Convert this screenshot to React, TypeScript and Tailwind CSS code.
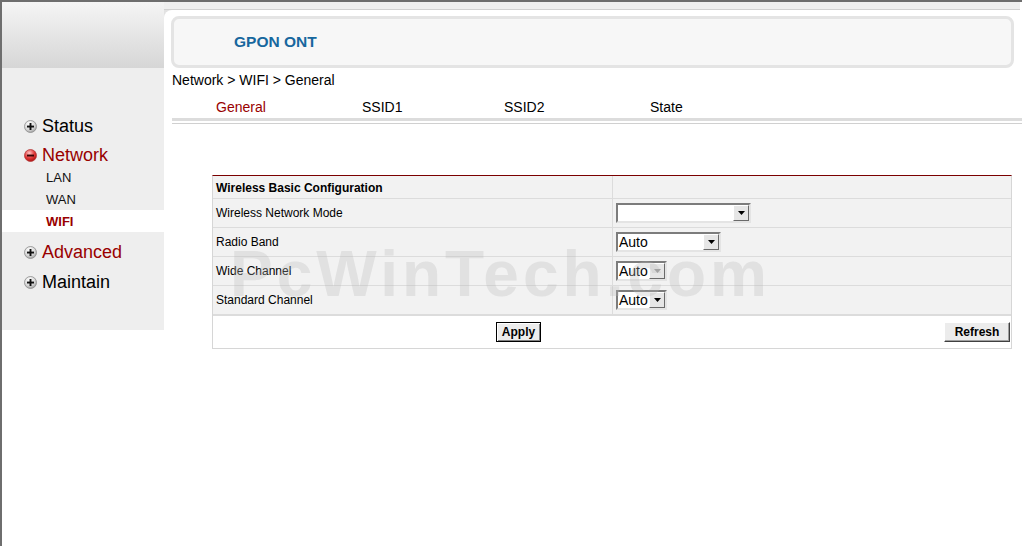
const font = "font-['Liberation_Sans',Arial,sans-serif]";

function Bullet({ open }: { open?: boolean }) {
  if (open) {
    return (
      <svg width="13" height="13" viewBox="0 0 13 13" className="shrink-0">
        <defs>
          <radialGradient id="bRed" cx="40%" cy="30%" r="75%">
            <stop offset="0" stopColor="#ffc4c4" />
            <stop offset="0.55" stopColor="#e23a3a" />
            <stop offset="1" stopColor="#a80c0c" />
          </radialGradient>
        </defs>
        <circle cx="6.5" cy="6.5" r="6" fill="url(#bRed)" stroke="#b23a3a" strokeWidth="0.8" />
        <rect x="3" y="5.6" width="7" height="1.9" fill="#3c0505" />
      </svg>
    );
  }
  return (
    <svg width="13" height="13" viewBox="0 0 13 13" className="shrink-0">
      <defs>
        <radialGradient id="bGrey" cx="40%" cy="30%" r="75%">
          <stop offset="0" stopColor="#ffffff" />
          <stop offset="0.6" stopColor="#d8d8d8" />
          <stop offset="1" stopColor="#9a9a9a" />
        </radialGradient>
      </defs>
      <circle cx="6.5" cy="6.5" r="6" fill="url(#bGrey)" stroke="#8c8c8c" strokeWidth="0.8" />
      <rect x="3" y="5.6" width="7" height="1.9" fill="#111" />
      <rect x="5.55" y="3" width="1.9" height="7" fill="#111" />
    </svg>
  );
}

function Select({ className, value, dim }: { className: string; value?: string; dim?: boolean }) {
  return (
    <div
      className={`flex h-[20px] bg-white border-2 border-t-[#7c7c7c] border-l-[#7c7c7c] border-b-[#e4e4e4] border-r-[#e4e4e4] ${className}`}
    >
      <div className="flex-1 pl-[1px] text-[14px] leading-[16px] text-black">{value}</div>
      <div className="flex w-[16px] items-center justify-center bg-[#e6e6e6] border border-t-white border-l-white border-b-[#6a6a6a] border-r-[#6a6a6a]">
        <svg width="7" height="4" viewBox="0 0 7 4">
          <path d="M0 0h7L3.5 4z" fill={dim ? "#9a9a9a" : "#000"} />
        </svg>
      </div>
    </div>
  );
}

const rows = [
  { label: "Wireless Network Mode", sel: <Select className="w-[135px]" /> },
  { label: "Radio Band", sel: <Select className="w-[105px]" value="Auto" /> },
  { label: "Wide Channel", sel: <Select className="w-[51px]" value="Auto" dim /> },
  { label: "Standard Channel", sel: <Select className="w-[51px]" value="Auto" /> },
];

export default function App() {
  return (
    <div className={`relative flex h-[546px] w-[1022px] overflow-hidden border-l-2 border-t-2 border-[#6e6e6e] bg-white ${font}`}>
      {/* sidebar */}
      <div className="w-[162px] shrink-0">
        <div className="h-[66px] bg-gradient-to-b from-[#f5f5f5] to-[#d6d6d6]" />
        <div className="h-[262px] bg-[#eeeeee] pt-[42px]">
          <div className="flex h-[30px] items-center gap-[5px] pl-[22px] pt-[2px] text-[18px] text-black">
            <Bullet />
            <span>Status</span>
          </div>
          <div className="flex h-[26px] items-center gap-[5px] pl-[22px] pt-[5px] text-[18px] text-[#990000]">
            <Bullet open />
            <span>Network</span>
          </div>
          <div className="flex h-[22px] items-center pl-[44px] pt-[2px] text-[13px] text-[#111]">LAN</div>
          <div className="flex h-[22px] items-center pl-[44px] pt-[2px] text-[13px] text-[#111]">WAN</div>
          <div className="flex h-[22px] items-center bg-white pl-[44px] pt-[2px] text-[13px] font-bold text-[#990000]">WIFI</div>
          <div className="mt-[4px] flex h-[30px] items-center gap-[5px] pl-[22px] pt-[2px] text-[18px] text-[#990000]">
            <Bullet />
            <span>Advanced</span>
          </div>
          <div className="flex h-[30px] items-center gap-[5px] pl-[22px] pt-[2px] text-[18px] text-black">
            <Bullet />
            <span>Maintain</span>
          </div>
        </div>
      </div>

      {/* main */}
      <div className="flex-1">
        <div className="mr-[2px] h-[8px] border-b border-[#d2d2d2] bg-[#f0f0f0]" />
        <div className="bg-[#e2e2e2]">
          <div className="rounded-tl-[8px] bg-white pt-[6px]">
            <div className="ml-[7px] mr-[8px] flex h-[52px] items-center rounded-[8px] border-[3px] border-[#e4e4e4] bg-[#f7f7f7] pl-[60px]">
              <span className="text-[15.5px] font-bold text-[#17679e]">GPON ONT</span>
            </div>
          </div>
        </div>

        <div className="flex h-[24px] items-center pl-[8px] text-[14px] text-black">Network &gt; WIFI &gt; General</div>

        <div className="flex h-[26px] pl-[52px] pt-[6px] text-[14px] leading-[18px] text-black">
          <span className="w-[146px] text-[#990000]">General</span>
          <span className="w-[142px]">SSID1</span>
          <span className="w-[146px]">SSID2</span>
          <span>State</span>
        </div>
        <div className="ml-[8px] border-t-[3px] border-[#dcdcdc]" />
        <div className="ml-[8px] mt-[2px] border-t border-[#d0d0d0]" />

        {/* config table */}
        <div className="ml-[48px] mt-[51px] w-[800px] border border-[#d6d6d6] border-t-[#7b0000] text-[12px] text-black">
          <div className="grid h-[22px] grid-cols-[400px_1fr] bg-[#f2f2f2]">
            <div className="flex items-center border-r border-[#dcdcdc] pl-[3px] pt-[1px] font-bold">Wireless Basic Configuration</div>
            <div />
          </div>
          {rows.map((r) => (
            <div key={r.label} className="grid h-[29px] grid-cols-[400px_1fr] border-t border-[#dcdcdc] bg-[#f2f2f2]">
              <div className="flex items-center border-r border-[#dcdcdc] pl-[3px]">{r.label}</div>
              <div className="flex items-center pl-[3px]">{r.sel}</div>
            </div>
          ))}
          <div className="flex h-[34px] items-start border-t-2 border-[#dcdcdc] pt-[6px]">
            <button className="ml-[283px] h-[20px] w-[45px] border border-black bg-[#ececec] text-[12px] font-bold shadow-[inset_1px_1px_0_#fff,inset_-1px_-1px_0_#808080]">
              Apply
            </button>
            <button className="ml-auto mr-[1px] h-[20px] w-[66px] border border-t-white border-l-white border-b-[#404040] border-r-[#404040] bg-[#ececec] text-[12px] font-bold shadow-[inset_-1px_-1px_0_#a0a0a0]">
              Refresh
            </button>
          </div>
        </div>
      </div>

      {/* watermark */}
      <div className="pointer-events-none absolute left-[228px] top-[240px] text-[64px] font-bold leading-none tracking-[4px] text-[rgba(185,185,185,0.3)]">
        PcWinTech.com
      </div>
    </div>
  );
}
